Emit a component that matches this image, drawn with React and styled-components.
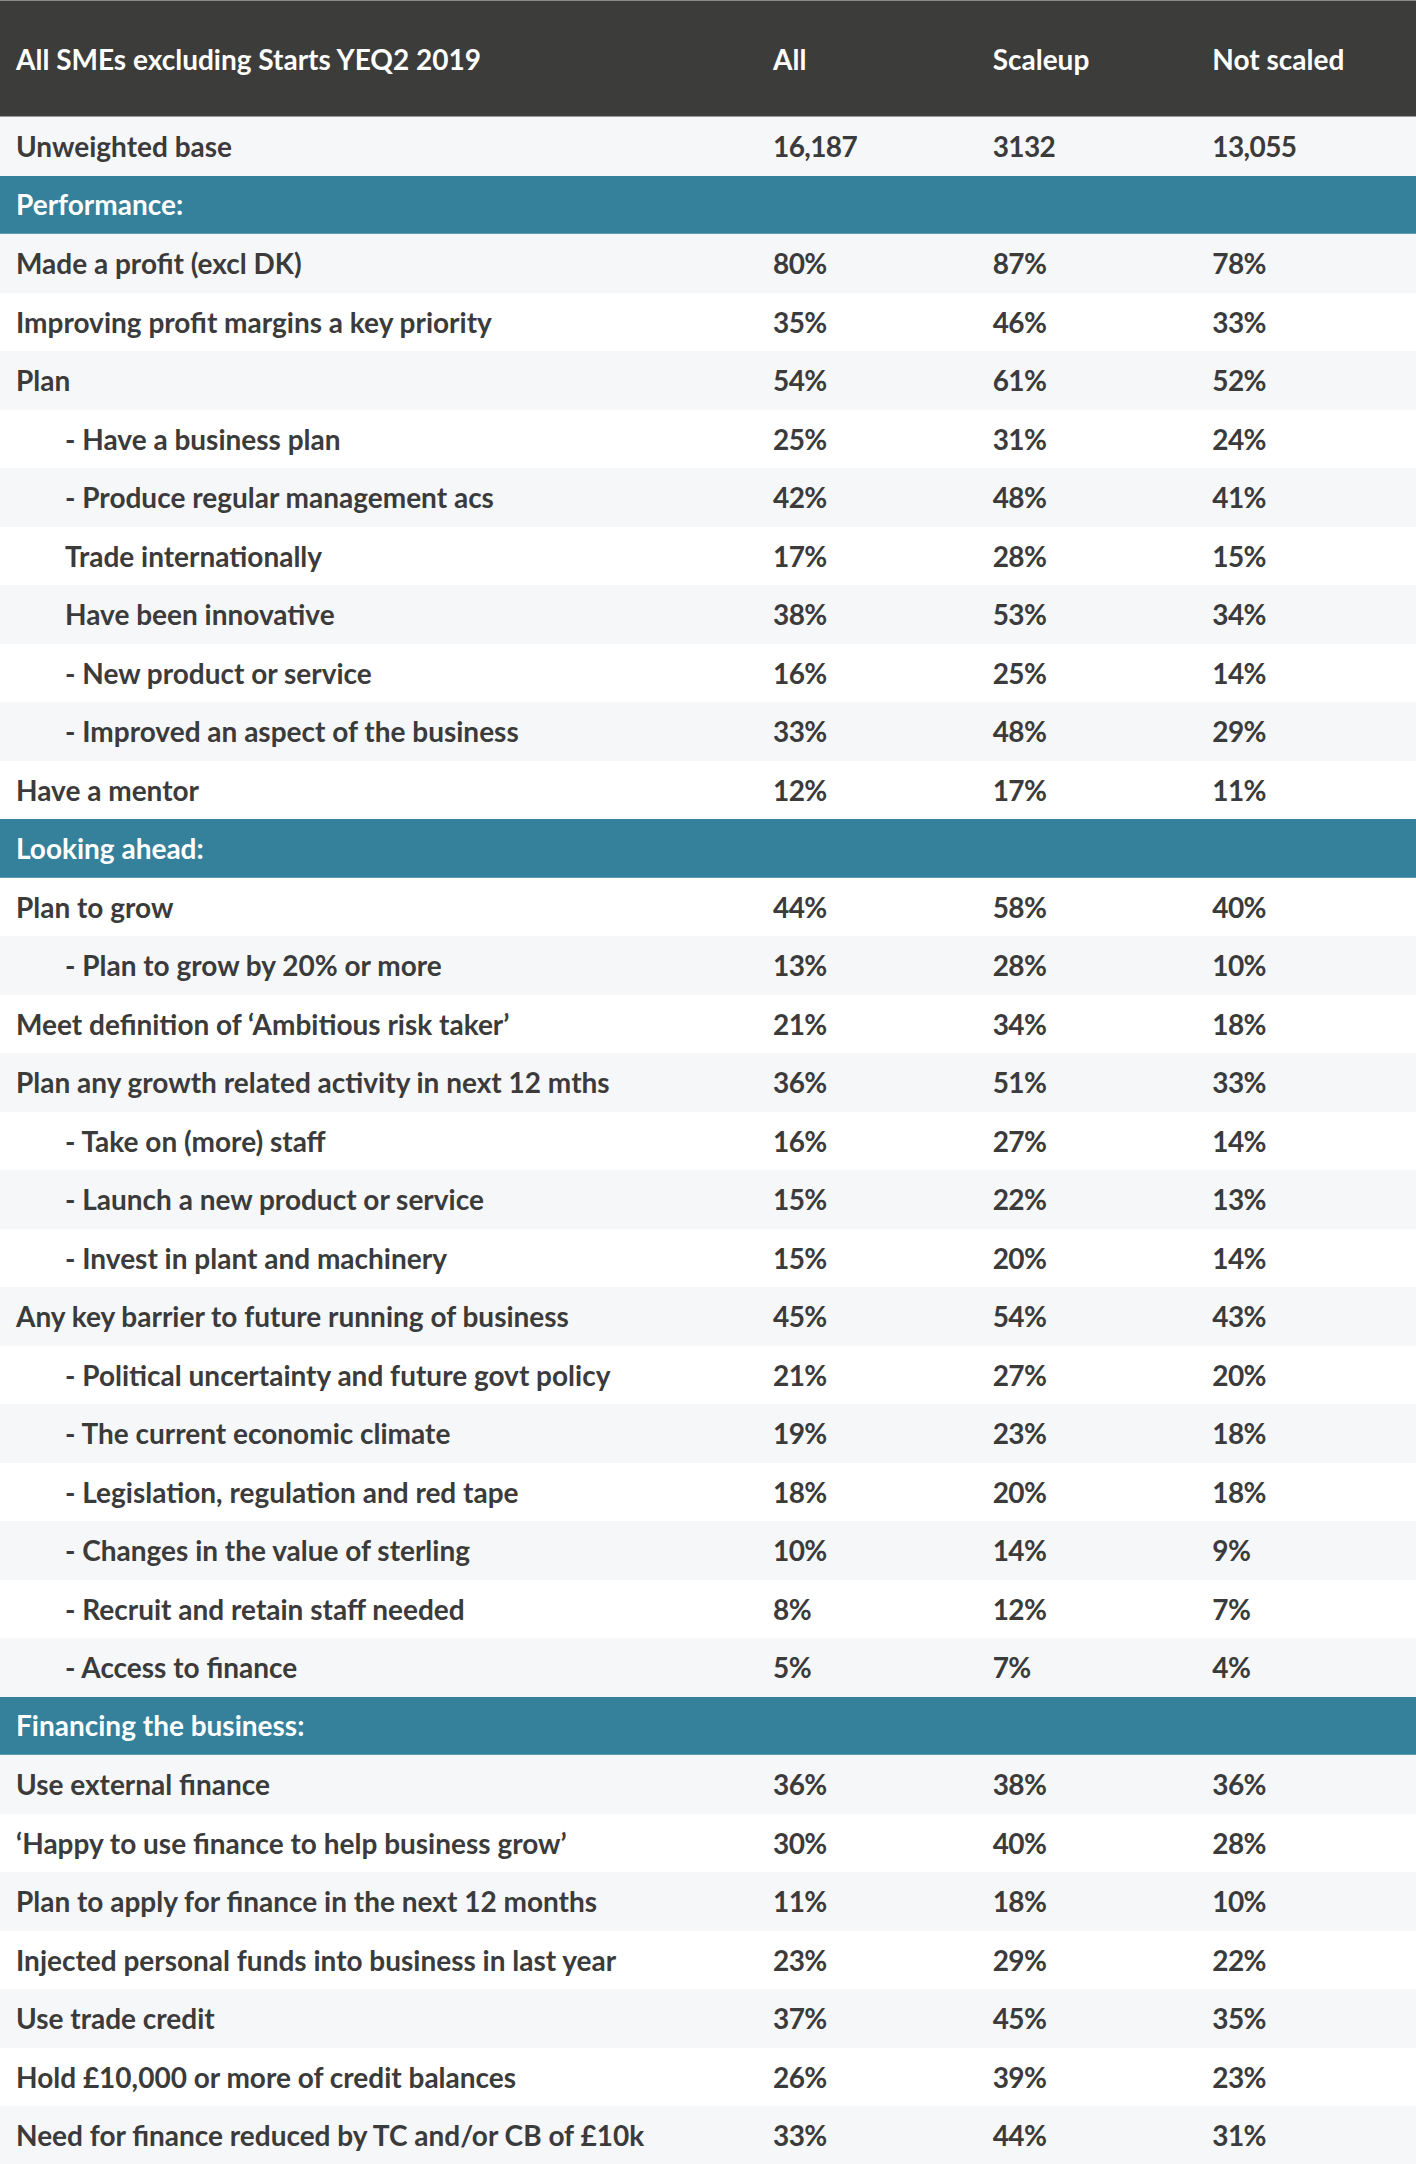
import React from "react";
import styled, { createGlobalStyle } from "styled-components";

const Global = createGlobalStyle`
  html, body { margin: 0; padding: 0; background: #ffffff; }
  body { font-family: Lato, "Open Sans", sans-serif; }
`;

const Table = styled.div`
  width: 1416px;
  display: flex;
  flex-direction: column;
  font-family: Lato, "Open Sans", sans-serif;
  font-weight: 700;
  font-size: 28px;
  letter-spacing: 0;
`;

const RowBase = styled.div`
  display: grid;
  grid-template-columns: 757px repeat(3, 1fr);
  align-items: center;
  box-sizing: border-box;
`;

const HeadRow = styled(RowBase)`
  height: 117px;
  background: #3c3c3a;
  color: #ffffff;
  border-top: 1px solid #8a8a88;
  border-bottom: 1px solid #9a9a9a;
`;

const BodyRow = styled(RowBase)`
  height: 58.5px;
  color: #3b3b3b;
  background: ${(p) => (p.$shade ? "#f6f7f9" : "#ffffff")};
`;

const SectionRow = styled(RowBase)`
  height: 58.5px;
  background: #35809a;
  color: #ffffff;
  border-bottom: 1px solid #5f9cb1;
`;

const Cell = styled.div`
  padding-left: ${(p) => (p.$indent ? "65px" : "16px")};
  white-space: nowrap;
`;

const NumCell = styled(Cell)`
  letter-spacing: -0.6px;
`;

const rows = [
  { label: "Unweighted base", v: ["16,187", "3132", "13,055"], s: 1 },
  { t: "s", label: "Performance:" },
  { label: "Made a profit (excl DK)", v: ["80%", "87%", "78%"], s: 1 },
  { label: "Improving profit margins a key priority", v: ["35%", "46%", "33%"], s: 0 },
  { label: "Plan", v: ["54%", "61%", "52%"], s: 1 },
  { label: "- Have a business plan", v: ["25%", "31%", "24%"], s: 0, i: 1 },
  { label: "- Produce regular management acs", v: ["42%", "48%", "41%"], s: 1, i: 1 },
  { label: "Trade internationally", v: ["17%", "28%", "15%"], s: 0, i: 1 },
  { label: "Have been innovative", v: ["38%", "53%", "34%"], s: 1, i: 1 },
  { label: "- New product or service", v: ["16%", "25%", "14%"], s: 0, i: 1 },
  { label: "- Improved an aspect of the business", v: ["33%", "48%", "29%"], s: 1, i: 1 },
  { label: "Have a mentor", v: ["12%", "17%", "11%"], s: 0 },
  { t: "s", label: "Looking ahead:" },
  { label: "Plan to grow", v: ["44%", "58%", "40%"], s: 0 },
  { label: "- Plan to grow by 20% or more", v: ["13%", "28%", "10%"], s: 1, i: 1 },
  { label: "Meet definition of \u2018Ambitious risk taker\u2019", v: ["21%", "34%", "18%"], s: 0 },
  { label: "Plan any growth related activity in next 12 mths", v: ["36%", "51%", "33%"], s: 1 },
  { label: "- Take on (more) staff", v: ["16%", "27%", "14%"], s: 0, i: 1 },
  { label: "- Launch a new product or service", v: ["15%", "22%", "13%"], s: 1, i: 1 },
  { label: "- Invest in plant and machinery", v: ["15%", "20%", "14%"], s: 0, i: 1 },
  { label: "Any key barrier to future running of business", v: ["45%", "54%", "43%"], s: 1 },
  { label: "- Political uncertainty and future govt policy", v: ["21%", "27%", "20%"], s: 0, i: 1 },
  { label: "- The current economic climate", v: ["19%", "23%", "18%"], s: 1, i: 1 },
  { label: "- Legislation, regulation and red tape", v: ["18%", "20%", "18%"], s: 0, i: 1 },
  { label: "- Changes in the value of sterling", v: ["10%", "14%", "9%"], s: 1, i: 1 },
  { label: "- Recruit and retain staff needed", v: ["8%", "12%", "7%"], s: 0, i: 1 },
  { label: "- Access to finance", v: ["5%", "7%", "4%"], s: 1, i: 1 },
  { t: "s", label: "Financing the business:" },
  { label: "Use external finance", v: ["36%", "38%", "36%"], s: 1 },
  { label: "\u2018Happy to use finance to help business grow\u2019", v: ["30%", "40%", "28%"], s: 0 },
  { label: "Plan to apply for finance in the next 12 months", v: ["11%", "18%", "10%"], s: 1 },
  { label: "Injected personal funds into business in last year", v: ["23%", "29%", "22%"], s: 0 },
  { label: "Use trade credit", v: ["37%", "45%", "35%"], s: 1 },
  { label: "Hold \u00a310,000 or more of credit balances", v: ["26%", "39%", "23%"], s: 0 },
  { label: "Need for finance reduced by TC and/or CB of \u00a310k", v: ["33%", "44%", "31%"], s: 1 },
];

export default function App() {
  return (
    <>
      <Global />
      <Table>
        <HeadRow>
          <Cell>All SMEs excluding Starts YEQ2 2019</Cell>
          <Cell>All</Cell>
          <Cell>Scaleup</Cell>
          <Cell>Not scaled</Cell>
        </HeadRow>
        {rows.map((r, idx) =>
          r.t === "s" ? (
            <SectionRow key={idx}>
              <Cell>{r.label}</Cell>
            </SectionRow>
          ) : (
            <BodyRow key={idx} $shade={!!r.s}>
              <Cell $indent={!!r.i}>{r.label}</Cell>
              {r.v.map((v, j) => (
                <NumCell key={j}>{v}</NumCell>
              ))}
            </BodyRow>
          )
        )}
      </Table>
    </>
  );
}
